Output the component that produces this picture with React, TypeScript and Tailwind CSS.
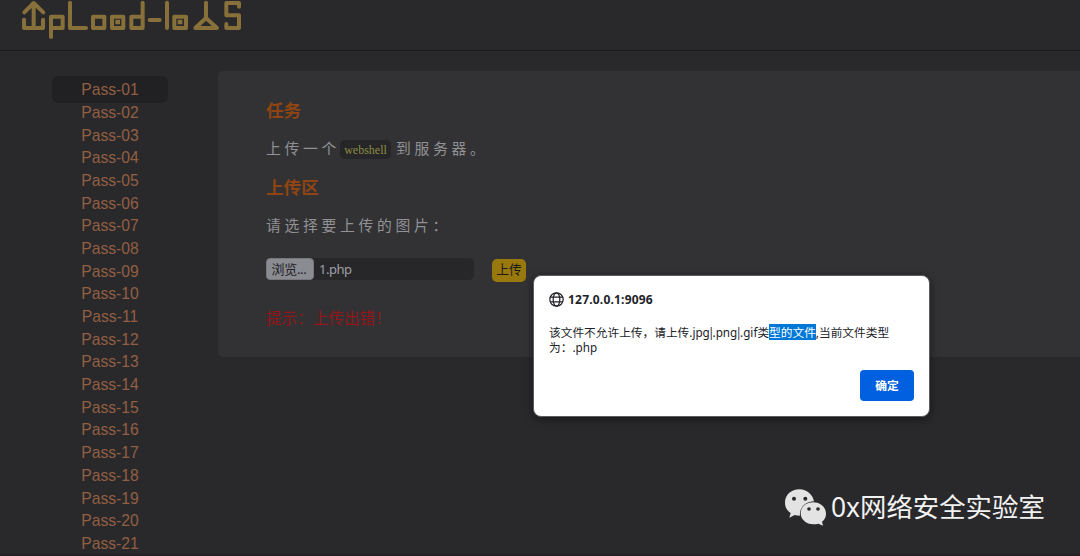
const passes = Array.from({ length: 20 }, (_, i) => `Pass-${String(i + 2).padStart(2, '0')}`);

function Logo() {
  return (
    <svg className="block h-[50px] w-[270px]" viewBox="0 0 810 150" fill="none" stroke="#87703a" strokeWidth="12" strokeLinecap="round" strokeLinejoin="round" aria-label="Upload-labs">
      <path d="M72 59V84H129V59M101 84V10M73 37L101 9L130 37" />
      <path d="M153 111V50H188V84H153" />
      <path d="M210 8V84H258" />
      <path d="M279 50H313V84H279Z" />
      <path d="M336 50H370V84H336Z" />
      <path d="M428 8V84H394V50H428" />
      <path d="M449 60H479" />
      <path d="M501 8V84" />
      <path d="M523 50H558V84H523Z" />
      <path d="M618 8V52M586 84L618 54L651 84Z" />
      <path d="M717 20V9H679V46H717V84H679V72" />
      <path d="M353 66H353.1M540 66H540.1" strokeWidth="14" strokeLinecap="square" />
    </svg>
  );
}

function Globe() {
  return (
    <svg className="h-[15px] w-[15px]" viewBox="0 0 15 15" fill="none" stroke="#222228" strokeWidth="1.2">
      <circle cx="7.5" cy="7.5" r="6.7" />
      <ellipse cx="7.5" cy="7.5" rx="3.3" ry="6.7" />
      <path d="M1.2 5.2H13.8M1.2 9.8H13.8" />
    </svg>
  );
}

function ChatBubbles() {
  return (
    <svg className="h-[37px] w-[43px] shrink-0" viewBox="0 0 129 111">
      <path fill="#e3e3e3" d="M47 1C21 1 3 18 3 41C3 54 9 65 20 72L16 86L32 78Q39 80 48 80C45 59 63 37 90 37C86 16 68 1 47 1Z" />
      <path fill="#e3e3e3" d="M88 40C66 40 50 54 50 73C50 92 67 106 88 106Q96 106 103 104L117 110L114 98C122 92 126 84 126 74C126 55 109 40 88 40Z" />
      <g fill="#29292b">
        <circle cx="30" cy="29" r="6" />
        <circle cx="64" cy="29" r="6" />
        <circle cx="75" cy="60" r="5.5" />
        <circle cx="102" cy="60" r="5.5" />
      </g>
    </svg>
  );
}

function Pipe() {
  return <span className="-mx-[1.85px]">|</span>;
}

export default function App() {
  return (
    <div className="relative h-[556px] w-full overflow-hidden border-b-2 border-[#241f27] bg-[#29292b] font-['Noto_Sans','Noto_Sans_CJK_SC',sans-serif]">
      <header className="h-[51px] border-b border-[#1a1a1c]">
        <Logo />
      </header>

      <div className="flex">
        <nav className="ml-[52px] mt-[25px] w-[116px] text-center font-['Liberation_Sans',sans-serif] text-[15.7px] text-[#935f43]">
          <div className="h-[27px] rounded-md bg-[#212123] leading-[27px]">Pass-01</div>
          <ul className="-mt-[1.2px]">
            {passes.map((p) => (
              <li key={p} className="h-[22.7px] leading-[22.7px]">{p}</li>
            ))}
          </ul>
        </nav>

        <main className="ml-[50px] mt-[20px] h-[286px] flex-1 rounded-l-[5px] bg-[#323234] pl-[48px] pt-[26px] text-[#919194]">
          <h3 className="h-[26px] text-[17.6px] font-bold leading-[26px] text-[#8f4412]">任务</h3>
          <p className="mt-[13px] flex h-[24px] items-center whitespace-nowrap text-[14.8px] tracking-[3.7px]">
            上传一个
            <code className="mr-[5px] mt-[3px] flex h-[19px] w-[51px] items-center justify-center rounded-[5px] bg-[#262628] pt-px font-['Liberation_Serif',serif] text-[12px] tracking-normal text-[#8c8c42]">webshell</code>
            到服务器。
          </p>
          <h3 className="mt-[14px] h-[26px] text-[17.6px] font-bold leading-[26px] text-[#8f4412]">上传区</h3>
          <p className="mt-[13px] h-[24px] whitespace-nowrap text-[14.8px] leading-[24px] tracking-[3.7px]">请选择要上传的图片：</p>
          <div className="mt-[21px] flex h-[24px] items-start">
            <div className="flex h-[22px] w-[208px] items-center rounded-[5px] bg-[#27272a] text-[13px]">
              <span className="flex h-[22px] w-[48px] items-center justify-center rounded-[4px] border border-[#77777d] bg-[#8b8b92] pr-[2px] text-[13px] leading-none tracking-[-0.3px] text-[#202024]">浏览...</span>
              <span className="ml-[5px] pt-[2px] tracking-[-0.5px] text-[#a0a0a6]">1.php</span>
            </div>
            <button className="ml-[18px] mt-px flex h-[23px] w-[34px] items-center justify-center whitespace-nowrap rounded-[5px] bg-[#99790e] pb-[2px] text-[12.8px] text-[#1c1a14]">上传</button>
          </div>
          <div className="mt-[23px] h-[26px] text-[15.6px] leading-[26px] text-[#94151a]">提示：上传出错！</div>
        </main>
      </div>

      <section className="absolute left-[533px] top-[275px] h-[142px] w-[397px] rounded-[8px] border border-[#5b5b60] bg-white px-[15px] pt-[15px] text-[#222228] shadow-[0_2px_10px_rgba(0,0,0,0.45)]">
        <div className="flex h-[17px] items-center gap-[4px] text-[12px] font-bold tracking-[0.2px]">
          <Globe />
          <span>127.0.0.1:9096</span>
        </div>
        <p className="mt-[17px] whitespace-nowrap text-[11.7px] leading-[15px]">
          该文件不允许上传，请上传.jpg<Pipe />.png<Pipe />.gif类<span className="bg-[#0078d7] text-white">型的文件</span>,当前文件类型
          <br />
          为：.php
        </p>
        <button className="ml-auto mt-[15px] flex h-[31px] w-[54px] items-center justify-center rounded-[4px] bg-[#0060df] text-[11.8px] font-bold text-white">确定</button>
      </section>

      <div className="absolute left-[784px] top-[488px] flex items-center gap-[4px] text-[#f2f2f2]">
        <ChatBubbles />
        <span className="whitespace-nowrap text-[26.4px] leading-[38px]">0x网络安全实验室</span>
      </div>
    </div>
  );
}
